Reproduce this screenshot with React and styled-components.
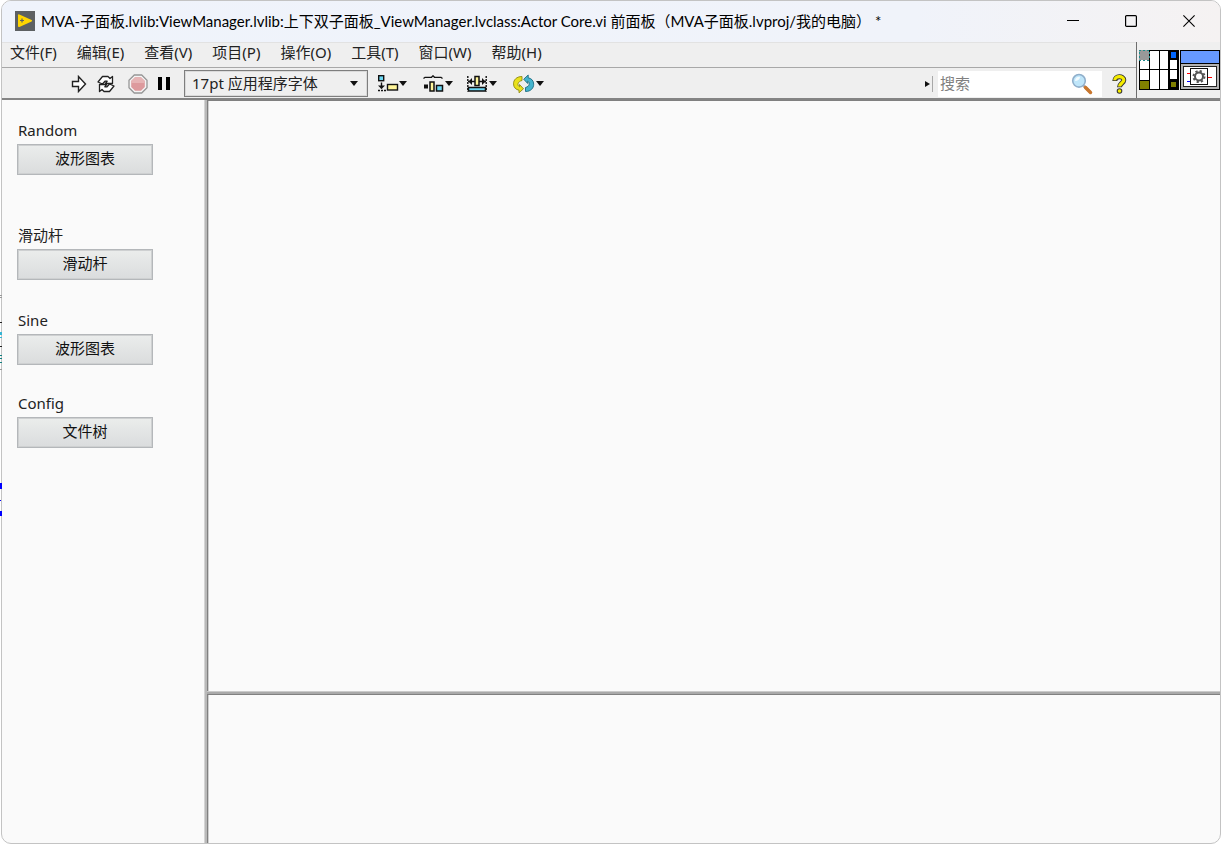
import styled, { createGlobalStyle } from 'styled-components'

const GlobalStyle = createGlobalStyle`
* {
box-sizing: border-box;
}
body {
margin: 0;
background-color: #FFF;
color: #000;
font-family: 'Noto Sans', 'Noto Sans CJK SC', sans-serif;
font-size: 15px;
}
button, input, select {
font: inherit;
color: inherit;
}
`

const MENU = [
  ['文件', 'F'],
  ['编辑', 'E'],
  ['查看', 'V'],
  ['项目', 'P'],
  ['操作', 'O'],
  ['工具', 'T'],
  ['窗口', 'W'],
  ['帮助', 'H']
]

const CONTROLS = [
  { label: 'Random', text: '波形图表', gap: 49 },
  { label: '滑动杆', text: '滑动杆', gap: 29 },
  { label: 'Sine', text: '波形图表', gap: 27 },
  { label: 'Config', text: '文件树', gap: 27 }
]

const Desktop = styled.div`
position: relative;
height: 100vh;
padding: 0 1px 1px;
`

const Behind = styled.svg`
position: absolute;
left: 0;
top: 290px;
z-index: 1;
`

const Window = styled.div`
height: 100%;
display: flex;
flex-direction: column;
border: 1px solid #C3C3C3;
border-radius: 10px;
overflow: hidden;
background-color: #FAFAFA;
`

const TitleBar = styled.header`
height: 41px;
flex: none;
display: flex;
align-items: center;
padding: 0 2px 2px 13px;
background: linear-gradient(90deg, #EFF3FB 0%, #F0F3FA 75%, #F5F2F2 100%);
`

const Title = styled.h1`
flex: 1;
margin: 0 0 0 6px;
font-family: Lato, 'Noto Sans CJK SC', sans-serif;
font-size: 15px;
line-height: 24px;
font-weight: 400;
white-space: pre;
overflow: hidden;
`

const CaptionButton = styled.button`
width: 58px;
height: 38px;
padding: 0;
border: 0;
background: none;
display: flex;
align-items: center;
justify-content: center;
`

const Head = styled.div`
display: flex;
flex: none;
border-bottom: 2px solid #848484;
background-color: #EFEFEF;
`

const Bars = styled.div`
flex: 1;
min-width: 0;
`

const MenuBar = styled.nav`
height: 26px;
display: flex;
align-items: center;
gap: 20px;
padding: 0 8px 6px;
border-top: 1px solid #E2E2E2;
border-bottom: 1px solid #A8A8A8;
`

const MenuItem = styled.button`
padding: 0;
border: 0;
background: none;
line-height: 20px;
color: #222;
white-space: nowrap;
`

const ToolBar = styled.div`
height: 30px;
display: flex;
align-items: center;
padding: 1px 0 0 68px;
`

const ToolButton = styled.button`
width: ${props => props.$width}px;
height: 28px;
padding: 0;
border: 0;
background: none;
display: flex;
align-items: center;
justify-content: center;
flex: none;
`

const FontBox = styled.div`
display: grid;
align-items: center;
width: 184px;
height: 27px;
margin: 0 5px 0 8px;
flex: none;
border: 1px solid #7E7E7E;
box-shadow: inset 0 0 0 1px #DADADA;

> * {
grid-area: 1 / 1;
}
> svg {
justify-self: end;
margin-right: 9px;
pointer-events: none;
}
`

const FontSelect = styled.select`
appearance: none;
width: 100%;
height: 25px;
padding: 0 24px 2px 7px;
border: 0;
background: none;
color: #222;
`

const Spacer = styled.div`
flex: 1;
`

const SearchMark = styled.div`
display: flex;
align-items: center;
gap: 2px;
height: 16px;
margin-right: 5px;
padding-right: 2px;
border-right: 1px solid #A8A8A8;
`

const SearchBox = styled.label`
display: flex;
align-items: center;
width: 164px;
height: 26px;
padding-right: 9px;
background-color: #FFF;
`

const SearchInput = styled.input`
flex: 1;
min-width: 0;
height: 26px;
padding: 0 2px 2px;
border: 0;
outline: 0;
background: none;

&::placeholder {
color: #808080;
opacity: 1;
}
`

const IconPane = styled.div`
display: flex;
gap: 1px;
flex: none;
padding: 7px 0 0 1px;
border-left: 1px solid #6E6E6E;
`

const Panel = styled.main`
flex: 1;
min-height: 0;
display: flex;
`

const Sidebar = styled.aside`
width: 203px;
flex: none;
padding: 19px 0 0 15px;
border-right: 1px solid #D4D4D4;
`

const Control = styled.div`
width: 136px;
margin-bottom: ${props => props.$gap}px;
`

const ControlLabel = styled.label`
display: block;
height: 25px;
padding-left: 1px;
line-height: 22px;
color: #222;
`

const ControlButton = styled.button`
display: block;
width: 100%;
height: 31px;
padding: 0 0 3px;
border: 1px solid #B4B7BA;
box-shadow: inset 0 0 0 1px #CED0D1;
background: linear-gradient(#EBEDEC, #DADCDD);
color: #111;
line-height: 24px;
`

const Subpanels = styled.div`
flex: 1;
display: flex;
flex-direction: column;
border-left: 2px solid #B9B9B9;
`

const Subpanel = styled.section`
flex: ${props => props.$flex};
border-left: 1px solid #808080;
border-top: 1px solid #808080;
box-shadow: inset 1px 0 0 #D0D0D0;
`

const Splitter = styled.div`
height: 3px;
flex: none;
border-top: 1px solid #CACACA;
background-color: #A9A9A9;
`

function LogoIcon() {
  return (
    <svg width="20" height="20" viewBox="0 0 20 20">
      <rect width="20" height="20" fill="#5D6063" />
      <path d="M3 4.2Q3 2.8 4.4 3.4L16.6 9Q17.8 9.7 16.6 10.4L4.4 15.9Q3 16.4 3 15Z" fill="#FFD500" />
      <path d="M7 7.5v4M5 9.5h4" stroke="#5D6063" strokeWidth="1.2" />
    </svg>
  )
}

function DropArrow() {
  return <path d="M0 0h8L4 5z" fill="#111" />
}

function RunIcon() {
  return (
    <svg width="16" height="18" viewBox="0 0 16 18">
      <path d="M1.5 6.5h6v-5l7 7.5-7 7.5v-5h-6z" fill="#FFF" stroke="#222" strokeWidth="1.4" />
    </svg>
  )
}

// the lower arrow is the upper one turned half way round
function LoopArrow() {
  return <path d="M2 7L6.5 1.500H12L14 3.500 16.500 1.500V8.500H9.500L11.200 6.200H9L6.500 9Z" />
}

function RunLoopIcon() {
  return (
    <svg width="20" height="18" viewBox="0 0 20 18" fill="#FFF" stroke="#222" strokeWidth="1.3" strokeLinejoin="round">
      <LoopArrow />
      <g transform="rotate(180 10 9)"><LoopArrow /></g>
    </svg>
  )
}

function StopIcon() {
  return (
    <svg width="20" height="20" viewBox="0 0 20 20">
      <path d="M6.3 1h7.4L19 6.3v7.4L13.7 19H6.3L1 13.7V6.3z" fill="#F4F4F4" stroke="#969696" strokeWidth="1.3" />
      <path d="M7 3.2h6L16.8 7v6L13 16.8H7L3.2 13V7z" fill="#DD9A9D" />
      <path d="M7 3.2h6L16.8 7v2H3.2V7z" fill="#E6B4B5" />
    </svg>
  )
}

function PauseIcon() {
  return (
    <svg width="12" height="13" viewBox="0 0 12 13">
      <path d="M0 0h4v13H0zM8 0h4v13H8z" fill="#000" />
    </svg>
  )
}

function AlignIcon() {
  return (
    <svg width="30" height="18" viewBox="0 0 30 18">
      <rect x=".7" y=".7" width="5" height="5" fill="#6CD8F4" stroke="#111" strokeWidth="1.4" />
      <path d="M3.5 7.5v6" stroke="#111" strokeWidth="1.4" />
      <path d="M0 10.5h7L3.5 14z" fill="#111" />
      <path d="M0 15.5h9" stroke="#111" strokeWidth="1.4" strokeDasharray="2 1" />
      <rect x="9.5" y="9.5" width="10" height="5.500" fill="#FFF59A" stroke="#111" strokeWidth="1.4" />
      <g transform="translate(21 6)"><DropArrow /></g>
    </svg>
  )
}

function DistributeIcon() {
  return (
    <svg width="30" height="18" viewBox="0 0 30 18">
      <path d="M.5 3.500L2 2.300H8.500L10 .8 11.500 2.300H18L19.500 3.500" fill="none" stroke="#111" strokeWidth="1.3" />
      <rect x="1" y="9.5" width="4" height="4" fill="#111" />
      <rect x="7" y="7" width="4" height="9" fill="#FFF59A" stroke="#111" strokeWidth="1.5" />
      <rect x="13.5" y="10.5" width="6" height="5.500" fill="#6CD8F4" stroke="#111" strokeWidth="1.5" />
      <g transform="translate(22 6)"><DropArrow /></g>
    </svg>
  )
}

function ResizeIcon() {
  return (
    <svg width="30" height="18" viewBox="0 0 30 18">
      <path d="M.8 1v15.5M19.2 1v15.5" stroke="#111" strokeWidth="1.4" strokeDasharray="2 1" />
      <path d="M1 6.5h7M12 6.5h7" stroke="#111" strokeWidth="1.4" />
      <path d="M1.5 6.5l3.5-3.5v7zM18.5 6.5l-3.5-3.5v7z" fill="#111" />
      <rect x="8" y="1.5" width="4" height="9" fill="#FFF59A" stroke="#111" strokeWidth="1.5" />
      <rect x="1.5" y="12.5" width="17" height="3.5" fill="#6CD8F4" stroke="#111" strokeWidth="1.5" />
      <g transform="translate(22 6)"><DropArrow /></g>
    </svg>
  )
}

function ReorderIcon() {
  return (
    <svg width="32" height="20" viewBox="0 0 32 20">
      <path d="M9 2.5C3.5 2.5.5 6 .5 9.800.5 13.500 3 15.700 6 16.200V18.800L10.500 14.800 6.500 10.500V12.800C4 11.500 4.500 7.500 9 6.500Z" fill="#E9E11C" stroke="#8E8A10" strokeWidth=".9" />
      <path d="M12.500 17.500C18 17.500 20.700 14 20.700 10.200 20.700 6.500 18.200 4.300 15.200 3.800V1L10.700 5.200 14.700 9.500V7.200C17.200 8.500 16.700 12.500 12.500 13.500Z" fill="#45B4CE" stroke="#1D6C80" strokeWidth=".9" />
      <g transform="translate(23 7)"><DropArrow /></g>
    </svg>
  )
}

function MagnifierIcon() {
  return (
    <svg width="22" height="22" viewBox="0 0 22 22">
      <path d="M12.5 12.5L19 19" stroke="#AFAFB4" strokeWidth="3" />
      <path d="M14.5 14.5L19.5 19.5" stroke="#C9772E" strokeWidth="3.5" strokeLinecap="round" />
      <circle cx="8" cy="7.8" r="6.3" fill="#BFE6FA" stroke="#90AFCB" strokeWidth="1.6" />
      <path d="M4 8C4 5 6 3.5 9 3.7 9 6 7 8 4 8z" fill="#F2FBFF" />
    </svg>
  )
}

function HelpIcon() {
  return (
    <svg width="15" height="20" viewBox="0 0 15 20" fill="none">
      <path d="M2.8 7C2.8 1.5 11.8 1.5 11.8 6 11.8 9 7.5 9.5 7.5 13.2" stroke="#333" strokeWidth="5" />
      <circle cx="7.5" cy="17" r="2.8" fill="#333" />
      <path d="M2.8 6.2C2.8 1.5 11.8 1.5 11.8 6 11.8 9 7.5 9.5 7.5 12.5" stroke="#F5EC00" strokeWidth="3.2" />
      <circle cx="7.5" cy="17" r="1.8" fill="#F5EC00" />
    </svg>
  )
}

function ConnectorPane() {
  return (
    <svg width="41" height="41" viewBox="0 0 41 41" shapeRendering="crispEdges">
      <rect x="1" y="1" width="40" height="40" fill="#000" />
      <path d="M2 2h9v18H2zM12 2h9v18h-9zM22 2h8v18h-8zM2 21h9v19H2zM12 21h9v19h-9zM22 21h8v19h-8zM32 11h7v9h-7zM32 21h7v9h-7z" fill="#FFF" />
      <rect x="1" y="1" width="10" height="10" fill="#FFF" />
      <rect x="1" y="1" width="10" height="10" fill="#999" stroke="#1D8A8A" strokeDasharray="2 2" />
      <rect x="33" y="3" width="5" height="6" fill="#0066FF" />
      <rect x="2" y="32" width="9" height="8" fill="#808000" />
      <path d="M2 31h9v1H2z" fill="#000" />
      <rect x="33" y="33" width="5" height="5" fill="#808000" />
    </svg>
  )
}

function ViIcon() {
  return (
    <svg width="40" height="41" viewBox="0 0 40 41">
      <rect x="0" y="1" width="40" height="40" fill="#000" />
      <rect x="1" y="2" width="38" height="12" fill="#6699FF" />
      <rect x="1" y="15" width="38" height="25" fill="#B3B3B3" />
      <rect x="3.5" y="17.5" width="33" height="20" fill="#FFF" stroke="#222" />
      <path d="M7 24.5h4M28 28.5h4" stroke="#F00" />
      <path d="M7 32.5h4" stroke="#00F" />
      <rect x="10.5" y="19.5" width="17" height="16" fill="#FFF" stroke="#111" />
      <circle cx="19" cy="27.5" r="4" fill="none" stroke="#555" strokeWidth="2" />
      <circle cx="19" cy="27.5" r="5.5" fill="none" stroke="#555" strokeWidth="2" strokeDasharray="2.2 2.12" />
    </svg>
  )
}

function CaptionButtons() {
  return (
    <>
      <CaptionButton aria-label="Minimize">
        <svg width="12" height="12"><path d="M0 5.5h12" stroke="#000" /></svg>
      </CaptionButton>
      <CaptionButton aria-label="Maximize">
        <svg width="12" height="12">
          <rect x=".6" y=".6" width="10.8" height="10.8" rx="1" fill="none" stroke="#000" strokeWidth="1.2" />
        </svg>
      </CaptionButton>
      <CaptionButton aria-label="Close">
        <svg width="12" height="12"><path d="M.4.4l11.2 11.2M11.6.4L.4 11.6" stroke="#000" strokeWidth="1.1" /></svg>
      </CaptionButton>
    </>
  )
}

function Tools() {
  return (
    <ToolBar>
      <ToolButton $width={18} aria-label="Run"><RunIcon /></ToolButton>
      <ToolButton $width={36} aria-label="Run continuously"><RunLoopIcon /></ToolButton>
      <ToolButton $width={28} aria-label="Abort"><StopIcon /></ToolButton>
      <ToolButton $width={24} aria-label="Pause"><PauseIcon /></ToolButton>
      <FontBox>
        <FontSelect aria-label="Font">
          <option>17pt 应用程序字体</option>
        </FontSelect>
        <svg width="8" height="5"><DropArrow /></svg>
      </FontBox>
      <ToolButton $width={40} aria-label="Align objects"><AlignIcon /></ToolButton>
      <ToolButton $width={50} aria-label="Distribute objects"><DistributeIcon /></ToolButton>
      <ToolButton $width={38} aria-label="Resize objects"><ResizeIcon /></ToolButton>
      <ToolButton $width={56} aria-label="Reorder"><ReorderIcon /></ToolButton>
      <Spacer />
      <SearchMark>
        <svg width="5" height="6"><path d="M0 0l5 3-5 3z" fill="#111" /></svg>
      </SearchMark>
      <SearchBox>
        <SearchInput type="text" placeholder="搜索" aria-label="搜索" />
        <MagnifierIcon />
      </SearchBox>
      <ToolButton $width={34} aria-label="Help"><HelpIcon /></ToolButton>
    </ToolBar>
  )
}

function App() {
  return (
    <Desktop>
      <GlobalStyle />
      <Behind width="2" height="230" shapeRendering="crispEdges">
        <path d="M0 5h2v1H0zM0 7h2v1H0zM0 79h2v1H0z" fill="#999" />
        <path d="M0 32h2v1H0zM0 56h2v1H0z" fill="#222" />
        <path d="M0 42h2v3H0zM0 47h2v1H0z" fill="#35B5D5" />
        <path d="M0 65h2v1H0zM0 68h2v1H0zM0 72h2v1H0z" fill="#118080" />
        <path d="M0 193h2v6H0zM0 210h1v1H0zM0 221h2v5H0z" fill="#00F" />
      </Behind>
      <Window>
        <TitleBar>
          <LogoIcon />
          <Title>MVA-子面板.lvlib:ViewManager.lvlib:上下双子面板_ViewManager.lvclass:Actor Core.vi 前面板（MVA子面板.lvproj/我的电脑） *</Title>
          <CaptionButtons />
        </TitleBar>
        <Head>
          <Bars>
            <MenuBar>
              {MENU.map(([name, key]) => <MenuItem key={key}>{name}({key})</MenuItem>)}
            </MenuBar>
            <Tools />
          </Bars>
          <IconPane>
            <ConnectorPane />
            <ViIcon />
          </IconPane>
        </Head>
        <Panel>
          <Sidebar>
            {CONTROLS.map(({ label, text, gap }, ix) => (
              <Control key={label} $gap={gap}>
                <ControlLabel htmlFor={`control${ix}`}>{label}</ControlLabel>
                <ControlButton id={`control${ix}`}>{text}</ControlButton>
              </Control>
            ))}
          </Sidebar>
          <Subpanels>
            <Subpanel $flex="1" />
            <Splitter />
            <Subpanel $flex="0 0 20%" />
          </Subpanels>
        </Panel>
      </Window>
    </Desktop>
  )
}

export default App
